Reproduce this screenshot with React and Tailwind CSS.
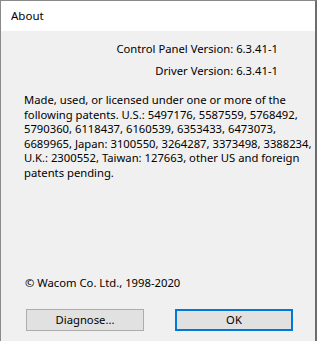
const lines = [
  'Made, used, or licensed under one or more of the',
  'following patents. U.S.: 5497176, 5587559, 5768492,',
  '5790360, 6118437, 6160539, 6353433, 6473073,',
  '6689965, Japan: 3100550, 3264287, 3373498, 3388234,',
  'U.K.: 2300552, Taiwan: 127663, other US and foreign',
  'patents pending.',
]

function App() {
  return (
    <div className="w-[317px] h-[341px] overflow-hidden bg-white font-['Noto_Sans',sans-serif] text-[11.25px] text-[#000]">
      <div className="flex flex-col h-full border-t border-l border-[#8a8a8a] border-r-2 border-r-[#6d6d6d]">
        {/* Title bar */}
        <div className="h-[30px] bg-white flex items-center pl-[10px] shrink-0">
          <span className="text-[11.5px]">About</span>
        </div>

        {/* Body */}
        <div className="flex-1 bg-[#f0f0f0] flex flex-col">
          <div className="flex flex-col items-end pr-[37px] pt-[7px] leading-[22px]">
            <span>Control Panel Version: 6.3.41-1</span>
            <span>Driver Version: 6.3.41-1</span>
          </div>

          <div className="pl-[23px] pt-[11px] leading-[14.5px]">
            {lines.map((l) => (
              <div key={l} className="whitespace-nowrap">{l}</div>
            ))}
          </div>

          <div className="pl-[24px] mt-auto mb-[17px]">© Wacom Co. Ltd., 1998-2020</div>

          <div className="flex pl-[25px] gap-[31px] mb-[10px]">
            <button className="w-[118px] h-[22px] bg-[#e1e1e1] border border-[#adadad] leading-none">
              Diagnose...
            </button>
            <button className="w-[118px] h-[22px] bg-[#e1e1e1] border-2 border-[#0078d7] leading-none">
              OK
            </button>
          </div>
        </div>
      </div>
    </div>
  )
}

export default App
